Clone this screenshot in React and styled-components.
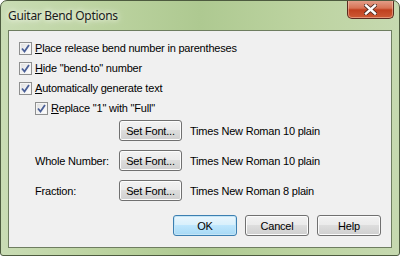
import React from "react";
import styled, { createGlobalStyle } from "styled-components";

const GlobalStyle = createGlobalStyle`
  html, body {
    margin: 0;
    padding: 0;
    background: #ffffff;
  }
`;

const Window = styled.div`
  box-sizing: border-box;
  width: 400px;
  height: 256px;
  display: flex;
  flex-direction: column;
  border: 1px solid #4d5b3f;
  border-radius: 7px 7px 3px 3px;
  background: linear-gradient(
    90deg,
    #c9dcb4 0%,
    #bcd3a0 25%,
    #aec991 50%,
    #bcd3a0 75%,
    #c6d9b0 100%
  );
  overflow: hidden;
`;

const TitleBar = styled.div`
  height: 29px;
  display: flex;
  align-items: flex-start;
  justify-content: space-between;
  padding-left: 7px;
`;

const Title = styled.div`
  font-family: "Noto Sans", sans-serif;
  font-size: 12px;
  letter-spacing: -0.3px;
  color: #1a1a1a;
  line-height: 29px;
  text-shadow: 0 0 8px #f4f8ee, 0 0 4px #f4f8ee;
`;

const CloseButton = styled.div`
  box-sizing: border-box;
  width: 47px;
  height: 19px;
  margin-top: -1px;
  margin-right: 5px;
  border: 1px solid #5a2a1f;
  border-top: none;
  border-radius: 0 0 5px 5px;
  background: linear-gradient(180deg, #e4a28e 0%, #d77355 45%, #c0401f 55%, #cd5a35 100%);
  box-shadow: inset 0 0 0 1px rgba(255, 220, 200, 0.45);
  display: flex;
  align-items: center;
  justify-content: center;
`;

const Client = styled.div`
  flex: 1;
  margin: 0 7px 7px;
  border: 1px solid #6e7d60;
  background: #f0f0f0;
  padding: 7px 0 0 10px;
  display: flex;
  flex-direction: column;
  font-family: "Liberation Sans", Arial, sans-serif;
  font-size: 11px;
  letter-spacing: -0.2px;
  color: #000;
`;

const CheckRow = styled.div`
  height: 20px;
  display: flex;
  align-items: center;
  gap: 3px;
  padding-left: ${(p) => (p.indent ? 16 : 0)}px;
`;

const Box = styled.span`
  box-sizing: border-box;
  width: 13px;
  height: 13px;
  border: 1px solid #8e8f8f;
  background: linear-gradient(135deg, #dcdcdc 0%, #f4f4f4 60%, #ffffff 100%);
  box-shadow: inset 0 0 0 1px #f4f4f4;
  display: flex;
  align-items: center;
  justify-content: center;
`;

const Key = styled.span`
  text-decoration: underline;
`;

const FontRows = styled.div`
  display: flex;
  flex-direction: column;
  gap: 9px;
  margin-top: 2px;
  padding-left: 16px;
`;

const FontRow = styled.div`
  display: flex;
  align-items: center;
  height: 21px;
`;

const Label = styled.span`
  width: 84px;
`;

const Button = styled.div`
  box-sizing: border-box;
  width: ${(p) => p.w || 63}px;
  height: 21px;
  border: 1px solid ${(p) => (p.primary ? "#3c7fb1" : "#707070")};
  border-radius: 3px;
  background: ${(p) =>
    p.primary
      ? "linear-gradient(180deg, #eaf6fd 0%, #d9f0fc 45%, #bee6fd 50%, #a7d9f5 100%)"
      : "linear-gradient(180deg, #f2f2f2 0%, #ebebeb 45%, #dddddd 50%, #cfcfcf 100%)"};
  box-shadow: inset 0 0 0 1px ${(p) => (p.primary ? "#c4e5f6" : "#fcfcfc")};
  display: flex;
  align-items: center;
  justify-content: center;
`;

const FontName = styled.span`
  margin-left: 8px;
`;

const Footer = styled.div`
  margin-top: 14px;
  padding-right: 10px;
  display: flex;
  justify-content: flex-end;
  gap: 8px;
`;

const Check = () => (
  <svg width="9" height="9" viewBox="0 0 9 9">
    <path d="M1 4.5 L3.5 7.5 L8 1" fill="none" stroke="#4a5f97" strokeWidth="1.8" />
  </svg>
);

const CheckItem = ({ indent, children }) => (
  <CheckRow indent={indent}>
    <Box>
      <Check />
    </Box>
    <span>{children}</span>
  </CheckRow>
);

const fonts = [
  { label: "", name: "Times New Roman 10 plain" },
  { label: "Whole Number:", name: "Times New Roman 10 plain" },
  { label: "Fraction:", name: "Times New Roman 8 plain" },
];

export default function App() {
  return (
    <>
      <GlobalStyle />
      <Window>
        <TitleBar>
          <Title>Guitar Bend Options</Title>
          <CloseButton>
            <svg width="13" height="11" viewBox="0 0 13 11">
              <path
                d="M2 1.5 L11 9.5 M11 1.5 L2 9.5"
                stroke="#4b2a20"
                strokeWidth="4"
                strokeLinecap="square"
              />
              <path
                d="M2 1.5 L11 9.5 M11 1.5 L2 9.5"
                stroke="#ffffff"
                strokeWidth="2.4"
                strokeLinecap="square"
              />
            </svg>
          </CloseButton>
        </TitleBar>
        <Client>
          <CheckItem>
            <Key>P</Key>lace release bend number in parentheses
          </CheckItem>
          <CheckItem>
            <Key>H</Key>ide "bend-to" number
          </CheckItem>
          <CheckItem>
            <Key>A</Key>utomatically generate text
          </CheckItem>
          <CheckItem indent>
            <Key>R</Key>eplace "1" with "Full"
          </CheckItem>
          <FontRows>
            {fonts.map((f, i) => (
              <FontRow key={i}>
                <Label>{f.label}</Label>
                <Button>Set Font...</Button>
                <FontName>{f.name}</FontName>
              </FontRow>
            ))}
          </FontRows>
          <Footer>
            <Button primary w={64}>OK</Button>
            <Button w={64}>Cancel</Button>
            <Button w={64}>Help</Button>
          </Footer>
        </Client>
      </Window>
    </>
  );
}
